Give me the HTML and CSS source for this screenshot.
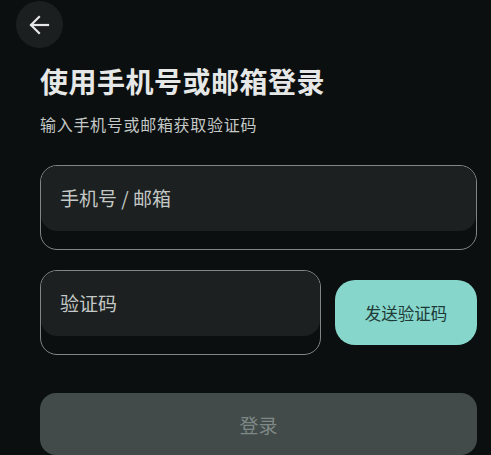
FILE: index.html
```html
<!DOCTYPE html>
<html lang="zh-CN">
<head>
    <meta charset="UTF-8">
    <meta name="viewport" content="width=device-width, initial-scale=1.0">
    <title>登录</title>
    <link rel="stylesheet" href="styles.css">
</head>
<body>
    <div class="page">
        <button class="back-btn" aria-label="返回">
            <svg width="22" height="22" viewBox="0 0 22 22" fill="none" stroke="#e6e8e7" stroke-width="2.2" stroke-linecap="square">
                <path d="M20 11H3.5"/>
                <path d="M11 3L3 11l8 8"/>
            </svg>
        </button>

        <div class="content">
            <h1 class="title">使用手机号或邮箱登录</h1>
            <p class="subtitle">输入手机号或邮箱获取验证码</p>

            <div class="field">
                <input type="text" placeholder="手机号 / 邮箱">
            </div>

            <div class="code-row">
                <div class="field code-field">
                    <input type="text" placeholder="验证码">
                </div>
                <button class="send-btn">发送验证码</button>
            </div>

            <button class="login-btn" disabled>登录</button>
        </div>
    </div>
</body>
</html>
```

FILE: styles.css
```css
body {
    margin: 0;
    background-color: #0b0f0f;
    font-family: "Noto Sans CJK SC", "Noto Sans", sans-serif;
    color: #e6e8e7;
}
.page {
    padding: 1px 14px 0 16px;
}
.back-btn {
    width: 47px;
    height: 47px;
    border-radius: 50%;
    border: none;
    background-color: #1b1f1f;
    display: flex;
    align-items: center;
    justify-content: center;
    padding: 0 2px 0 0;
    cursor: pointer;
}
.content {
    margin-left: 24px;
}
.title {
    margin: 13px 0 0;
    font-size: 28px;
    line-height: 40px;
    letter-spacing: 0.5px;
    font-weight: 700;
    color: #e6e8e7;
}
.subtitle {
    margin: 11px 0 0;
    font-size: 16px;
    line-height: 24px;
    letter-spacing: 0.7px;
    color: #c4c8c6;
}
.field {
    margin-top: 29px;
    height: 83px;
    border: 1px solid #808684;
    border-radius: 17px;
    overflow: hidden;
}
.field input {
    display: block;
    width: 100%;
    box-sizing: border-box;
    height: 65px;
    border: none;
    outline: none;
    border-radius: 16px;
    background-color: #1c2020;
    padding: 0 19px 3px;
    font-family: inherit;
    font-size: 19px;
    color: #e6e8e7;
}
.field input::placeholder {
    color: #c4c8c6;
}
.code-row {
    margin-top: 20px;
    display: flex;
    align-items: center;
    gap: 14px;
}
.code-field {
    margin-top: 0;
    flex: 1;
}
.send-btn {
    width: 142px;
    height: 65px;
    border: none;
    border-radius: 20px;
    background-color: #86d6cb;
    color: #1d3a36;
    font-family: inherit;
    font-size: 16.5px;
    cursor: pointer;
}
.login-btn {
    display: block;
    width: 100%;
    margin-top: 38px;
    height: 62px;
    border: none;
    border-radius: 16px;
    background-color: #424b49;
    color: #7e8886;
    font-family: inherit;
    font-size: 19px;
}
```
